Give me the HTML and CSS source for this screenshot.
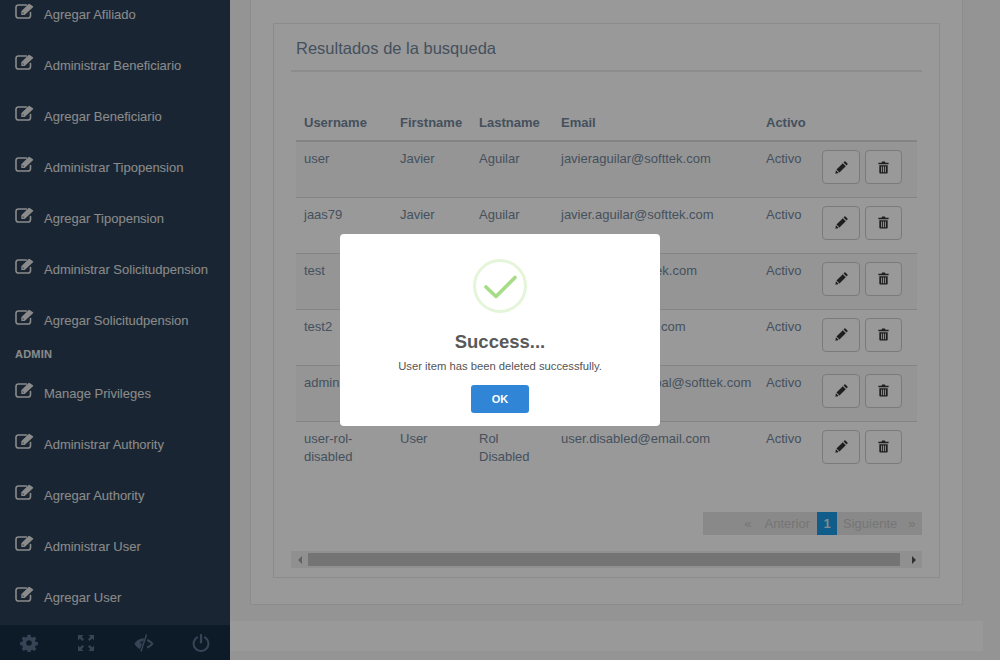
FILE: index.html
```html
<!DOCTYPE html>
<html lang="es">
<head>
<meta charset="utf-8">
<title>Usuarios</title>
<link rel="stylesheet" href="styles.css">
</head>
<body>
<svg class="defs" aria-hidden="true">
  <symbol id="i-edit" viewBox="0 0 20 16">
    <path d="M15.500 9.500v3.200a2.300 2.300 0 0 1-2.300 2.300H3.300A2.300 2.300 0 0 1 1 12.700V4.300A2.300 2.300 0 0 1 3.300 2h8.200" fill="none" stroke="currentColor" stroke-width="1.600" stroke-linecap="round"/>
    <path d="M6.300 8.200 13.600 .9a.7.7 0 0 1 1 0l3.400 2.400a.7.7 0 0 1 0 1L9.700 12H6.300zM7.700 9v1.500h1.500" fill="currentColor" fill-rule="evenodd"/>
  </symbol>
  <symbol id="i-pencil" viewBox="0 0 14 14">
    <path d="M9.200 1.600 10.200.6a.8.8 0 0 1 1.100 0l2.100 2.100a.8.8 0 0 1 0 1.100l-1 1zM8.400 2.400l3.200 3.200-6.800 6.800-3.200-3.200zM1 10 4 13 .4 13.600z" fill="currentColor"/>
  </symbol>
  <symbol id="i-trash" viewBox="0 0 12 14">
    <path d="M4.500.5h3l.6 1.300H11.500v1.700H.5V1.800h3.400zM1.500 4.500h9v8a1 1 0 0 1-1 1h-7a1 1 0 0 1-1-1zM3.500 6v6h1V6zM5.500 6v6h1V6zM7.500 6v6h1V6z" fill="currentColor" fill-rule="evenodd"/>
  </symbol>
</svg>

<div class="page">
  <aside class="sidebar">
    <nav class="menu">
      <a class="item"><svg class="edit"><use href="#i-edit"/></svg><span>Agregar Afiliado</span></a>
      <a class="item"><svg class="edit"><use href="#i-edit"/></svg><span>Administrar Beneficiario</span></a>
      <a class="item"><svg class="edit"><use href="#i-edit"/></svg><span>Agregar Beneficiario</span></a>
      <a class="item"><svg class="edit"><use href="#i-edit"/></svg><span>Administrar Tipopension</span></a>
      <a class="item"><svg class="edit"><use href="#i-edit"/></svg><span>Agregar Tipopension</span></a>
      <a class="item"><svg class="edit"><use href="#i-edit"/></svg><span>Administrar Solicitudpension</span></a>
      <a class="item"><svg class="edit"><use href="#i-edit"/></svg><span>Agregar Solicitudpension</span></a>
      <h3 class="section">ADMIN</h3>
      <a class="item"><svg class="edit"><use href="#i-edit"/></svg><span>Manage Privileges</span></a>
      <a class="item"><svg class="edit"><use href="#i-edit"/></svg><span>Administrar Authority</span></a>
      <a class="item"><svg class="edit"><use href="#i-edit"/></svg><span>Agregar Authority</span></a>
      <a class="item"><svg class="edit"><use href="#i-edit"/></svg><span>Administrar User</span></a>
      <a class="item"><svg class="edit"><use href="#i-edit"/></svg><span>Agregar User</span></a>
    </nav>
    <div class="side-footer">
      <a class="tool"><svg width="18" height="18" viewBox="0 0 18 18"><path d="M7.500.8h3l.4 2.300 1.400.6 1.900-1.300 2.100 2.100-1.300 1.900.6 1.400 2.300.4v3l-2.300.4-.6 1.400 1.300 1.900-2.100 2.100-1.900-1.300-1.400.6-.4 2.300h-3l-.4-2.300-1.400-.6-1.900 1.300-2.100-2.100 1.300-1.900-.6-1.400-2.300-.4v-3l2.300-.4.6-1.400-1.300-1.900 2.100-2.100 1.900 1.300 1.400-.6zM9 6.200a2.800 2.800 0 1 0 0 5.600 2.800 2.800 0 0 0 0-5.600z" fill="currentColor" fill-rule="evenodd"/></svg></a>
      <a class="tool"><svg width="18" height="18" viewBox="0 0 18 18"><path d="M1 1h5.500L4.600 2.900 7 5.300 5.300 7 2.900 4.600 1 6.500zM17 1v5.500l-1.900-1.900L12.700 7 11 5.300l2.400-2.400L11.500 1zM1 17v-5.500l1.900 1.900L5.300 11 7 12.700 4.600 15.100 6.500 17zM17 17h-5.500l1.900-1.900L11 12.700 12.700 11l2.400 2.400 1.900-1.900z" fill="currentColor"/></svg></a>
      <a class="tool"><svg width="20" height="18" viewBox="0 0 20 18"><path d="M11.800 .2 13.200.8 7.700 17.800 6.300 17.200zM10.200 4.200 6 15.200C3.500 13.900 1.500 11.900.4 9.800 2.400 6.300 6 4.100 10.200 4.200zM7.600 7.200a1.300 1.300 0 1 0 1.300 1.300 1.300 1.300 0 0 0-1.300-1.300zM13.600 5c2.400 1 4.600 2.800 6 4.800-1.400 2-3.600 3.800-6.200 4.600l-.7-1.900c1.700-.6 3.300-1.600 4.400-2.700-1.200-1.200-2.800-2.200-4.200-2.900z" fill="currentColor" fill-rule="evenodd"/></svg></a>
      <a class="tool"><svg width="18" height="18" viewBox="0 0 18 18"><path d="M9 1v7.500" stroke="currentColor" stroke-width="2.200" stroke-linecap="round" fill="none"/><path d="M5 3.400a7.400 7.400 0 1 0 8 0" stroke="currentColor" stroke-width="2" stroke-linecap="round" fill="none"/></svg></a>
    </div>
  </aside>

  <main class="main">
    <div class="content">
      <section class="outer">
        <div class="inner">
          <h2 class="title">Resultados de la busqueda</h2>
          <div class="scroller">
            <table class="grid">
              <thead>
                <tr><th class="c1">Username</th><th class="c2">Firstname</th><th class="c3">Lastname</th><th class="c4">Email</th><th class="c5">Activo</th><th class="c6"></th></tr>
              </thead>
              <tbody>
                <tr><td>user</td><td>Javier</td><td>Aguilar</td><td>javieraguilar@softtek.com</td><td>Activo</td><td class="acts"><button class="btn e"><svg class="ic"><use href="#i-pencil"/></svg></button><button class="btn"><svg class="ic"><use href="#i-trash"/></svg></button></td></tr>
                <tr><td>jaas79</td><td>Javier</td><td>Aguilar</td><td>javier.aguilar@softtek.com</td><td>Activo</td><td class="acts"><button class="btn e"><svg class="ic"><use href="#i-pencil"/></svg></button><button class="btn"><svg class="ic"><use href="#i-trash"/></svg></button></td></tr>
                <tr><td>test</td><td></td><td></td><td>test.users@softtek.com</td><td>Activo</td><td class="acts"><button class="btn e"><svg class="ic"><use href="#i-pencil"/></svg></button><button class="btn"><svg class="ic"><use href="#i-trash"/></svg></button></td></tr>
                <tr><td>test2</td><td></td><td></td><td>test.two@softtek.com</td><td>Activo</td><td class="acts"><button class="btn e"><svg class="ic"><use href="#i-pencil"/></svg></button><button class="btn"><svg class="ic"><use href="#i-trash"/></svg></button></td></tr>
                <tr><td>admin</td><td></td><td></td><td>admin.sys.principal@softtek.com</td><td>Activo</td><td class="acts"><button class="btn e"><svg class="ic"><use href="#i-pencil"/></svg></button><button class="btn"><svg class="ic"><use href="#i-trash"/></svg></button></td></tr>
                <tr><td>user-rol-disabled</td><td>User</td><td>Rol Disabled</td><td>user.disabled@email.com</td><td>Activo</td><td class="acts"><button class="btn e"><svg class="ic"><use href="#i-pencil"/></svg></button><button class="btn"><svg class="ic"><use href="#i-trash"/></svg></button></td></tr>
              </tbody>
            </table>
          </div>
          <div class="pager">
            <a class="pg first">«</a><a class="pg">Anterior</a><a class="pg cur">1</a><a class="pg next">Siguiente</a><a class="pg last">»</a>
          </div>
          <div class="hbar">
            <span class="hbtn"><i class="tri left"></i></span>
            <span class="thumb"></span>
            <span class="hbtn wide"><i class="tri right"></i></span>
          </div>
        </div>
      </section>
    </div>
    <footer class="foot"></footer>
  </main>
</div>

<div class="overlay">
  <div class="modal">
    <svg class="ok-icon" width="56" height="56" viewBox="0 0 56 56">
      <circle cx="28" cy="28" r="25.500" fill="none" stroke="#e4f5d9" stroke-width="3"/>
      <path d="M14 29 24 38.500 43 19.500" fill="none" stroke="#a5dc86" stroke-width="3.600" stroke-linecap="round" stroke-linejoin="round"/>
    </svg>
    <h2 class="m-title">Success...</h2>
    <p class="m-text">User item has been deleted successfully.</p>
    <button class="m-btn">OK</button>
  </div>
</div>
</body>
</html>
```

FILE: styles.css
```css
* { box-sizing: border-box; }
html, body { margin: 0; height: 100%; overflow: hidden; }
body { font-family: "Liberation Sans", Arial, sans-serif; font-size: 13px; color: #73879c; background: #f7f7f7; }
.defs { display: none; }
.page { display: flex; height: 660px; }

.sidebar { width: 230px; flex: none; display: flex; flex-direction: column; background: #2a3f54; color: #e7e7e7; }
.menu { flex: 1; overflow: hidden; margin-top: -11px; }
.item { display: flex; align-items: center; height: 51px; padding-left: 15px; color: #e7e7e7; font-size: 13px; }
.item span { margin-left: 11px; }
.edit { width: 20px; height: 16px; margin-top: -7px; margin-right: -2px; color: #e7e7e7; }
.section { margin: 0; height: 22px; padding-left: 15px; padding-top: 1px; font-size: 11px; line-height: 14px; font-weight: bold; color: #e7e7e7; letter-spacing: .2px; }
.side-footer { height: 35px; flex: none; display: flex; background: #172d44; }
.tool { flex: 1; display: flex; align-items: center; justify-content: center; color: #5a738e; }

.main { flex: 1; min-width: 0; display: flex; flex-direction: column; padding-right: 17px; }
.content { flex: 1; min-height: 0; padding: 0 20px; }
.outer { height: 615px; margin-top: -10px; padding: 32px 22px 26px; background: #fff; border: 1px solid #e6e9ed; width: 713px; }
.inner { height: 100%; padding: 10px 17px; background: #fff; border: 1px solid #e6e9ed; display: flex; flex-direction: column; }
.title { flex: none; margin: 0; padding: 0 5px; height: 38px; border-bottom: 2px solid #e6e9ed; font-size: 16.500px; font-weight: normal; line-height: 28px; color: #73879c; }
.scroller { flex: none; margin: 31px 5px 0; }
.grid { width: 621px; border-collapse: collapse; table-layout: fixed; font-size: 13px; line-height: 18px; }
.grid th { text-align: left; font-weight: bold; padding: 10px 8px 8px; border-bottom: 2px solid #ddd; height: 38px; }
.grid td { padding: 8px; vertical-align: top; border-top: 1px solid #ddd; height: 56px; }
.grid tbody tr:first-child td { border-top: 0; }
.grid tbody tr:nth-child(odd) { background: #f9f9f9; }
.c1 { width: 96px; } .c2 { width: 79px; } .c3 { width: 82px; } .c4 { width: 205px; } .c5 { width: 56px; } .c6 { width: 103px; }
.grid td.acts { padding: 8px 15px 0 0; white-space: nowrap; text-align: right; }
.btn { display: inline-flex; align-items: center; justify-content: center; width: 37px; height: 34px; padding: 0; background: #fff; border: 1px solid #ccc; border-radius: 4px; color: #333; vertical-align: top; }
.btn.e { width: 38px; margin-right: 5px; }
.ic { width: 13px; height: 13px; }

.pager { flex: none; display: flex; justify-content: flex-end; align-items: stretch; align-self: flex-end; width: 219px; height: 23px; margin: 35px 0 0; background: #e4e4e4; color: #c4c4c4; font-size: 13px; line-height: 23px; }
.pg { padding: 0 7px 0 6px; }
.pg.first { padding: 0 7px 0 0; }
.pg.cur { background: #1c9be8; color: #d5e6f2; font-weight: bold; padding: 0; width: 20px; text-align: center; }
.pg.next { padding: 0 7px 0 6px; }
.pg.last { padding: 0 6.500px 0 4px; }
.hbar { flex: none; display: flex; height: 17px; margin-top: 16px; background: #f1f1f1; align-items: center; }
.hbtn { width: 17px; height: 17px; flex: none; display: flex; align-items: center; justify-content: center; }
.hbtn.wide { width: 22px; padding-left: 6px; }
.thumb { flex: 1; height: 13px; background: #c1c1c1; }
.tri { width: 0; height: 0; border-top: 4px solid transparent; border-bottom: 4px solid transparent; }
.tri.left { border-right: 4px solid #a3a3a3; }
.tri.right { border-left: 4px solid #505050; }

.foot { height: 30px; margin-bottom: 9px; background: #fff; flex: none; }

.overlay { position: fixed; inset: 0; background: rgba(0,0,0,.4); display: flex; align-items: center; justify-content: center; }
.modal { width: 320px; height: 192px; background: #fff; border-radius: 4px; display: flex; flex-direction: column; align-items: center; padding-top: 24px; }
.ok-icon { display: block; }
.m-title { margin: 16px 0 0; font-size: 18.500px; line-height: 24px; color: #595959; font-weight: bold; }
.m-text { margin: 5px 0 0; font-size: 11.250px; line-height: 14px; color: #545454; }
.m-btn { margin-top: 12px; width: 58px; height: 28px; border: 0; border-radius: 3px; background: #3085d6; color: #fff; font-family: inherit; font-size: 11px; font-weight: bold; padding: 0; }
```
